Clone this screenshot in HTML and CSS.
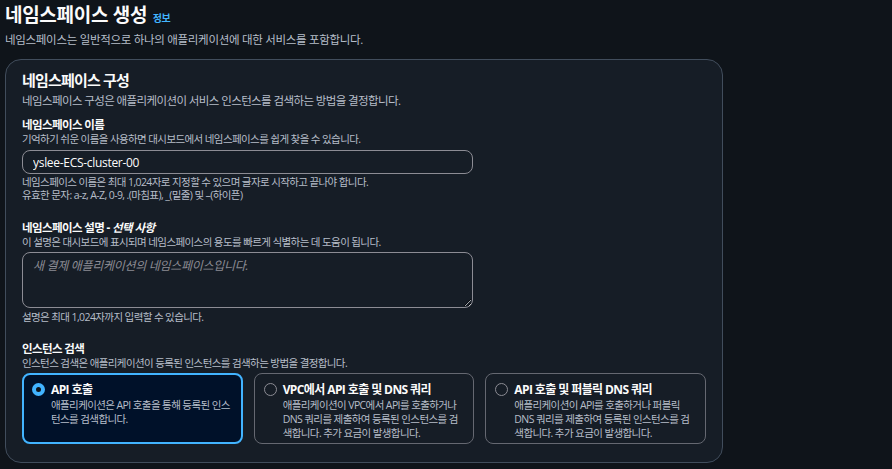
FILE: index.html
```html
<!DOCTYPE html>
<html lang="ko">
<head>
	<meta charset="utf-8">
	<title>네임스페이스 생성</title>
	<link rel="stylesheet" href="styles.css">
</head>
<body>
	<div class="page">
		<div class="page-head">
			<h1>네임스페이스 생성 <a class="info" href="#">정보</a></h1>
			<p class="sub">네임스페이스는 일반적으로 하나의 애플리케이션에 대한 서비스를 포함합니다.</p>
		</div>

		<div class="card">
			<h2>네임스페이스 구성</h2>
			<p class="desc">네임스페이스 구성은 애플리케이션이 서비스 인스턴스를 검색하는 방법을 결정합니다.</p>

			<!-- 이름 -->
			<div class="field">
				<label class="label">네임스페이스 이름</label>
				<div class="hint">기억하기 쉬운 이름을 사용하면 대시보드에서 네임스페이스를 쉽게 찾을 수 있습니다.</div>
				<input class="input" type="text" value="yslee-ECS-cluster-00">
				<div class="note">네임스페이스 이름은 최대 1,024자로 지정할 수 있으며 글자로 시작하고 끝나야 합니다.<br>유효한 문자: a-z, A-Z, 0-9, .(마침표), _(밑줄) 및 –(하이픈)</div>
			</div>

			<!-- 설명 -->
			<div class="field">
				<label class="label">네임스페이스 설명 - <i>선택 사항</i></label>
				<div class="hint">이 설명은 대시보드에 표시되며 네임스페이스의 용도를 빠르게 식별하는 데 도움이 됩니다.</div>
				<textarea class="input area" placeholder="새 결제 애플리케이션의 네임스페이스입니다."></textarea>
				<div class="note">설명은 최대 1,024자까지 입력할 수 있습니다.</div>
			</div>

			<!-- 인스턴스 검색 -->
			<div class="field">
				<label class="label">인스턴스 검색</label>
				<div class="hint">인스턴스 검색은 애플리케이션이 등록된 인스턴스를 검색하는 방법을 결정합니다.</div>
				<div class="tiles">
					<div class="tile on">
						<span class="radio"></span>
						<div>
							<div class="tile-title">API 호출</div>
							<div class="tile-desc">애플리케이션은 API 호출을 통해 등록된 인스턴스를 검색합니다.</div>
						</div>
					</div>
					<div class="tile">
						<span class="radio"></span>
						<div>
							<div class="tile-title">VPC에서 API 호출 및 DNS 쿼리</div>
							<div class="tile-desc">애플리케이션이 VPC에서 API를 호출하거나 DNS 쿼리를 제출하여 등록된 인스턴스를 검색합니다. 추가 요금이 발생합니다.</div>
						</div>
					</div>
					<div class="tile">
						<span class="radio"></span>
						<div>
							<div class="tile-title">API 호출 및 퍼블릭 DNS 쿼리</div>
							<div class="tile-desc">애플리케이션이 API를 호출하거나 퍼블릭 DNS 쿼리를 제출하여 등록된 인스턴스를 검색합니다. 추가 요금이 발생합니다.</div>
						</div>
					</div>
				</div>
			</div>
		</div>
	</div>
</body>
</html>
```

FILE: styles.css
```css
html,body{margin:0;padding:0;background:#0f141a;}
body{font-family:"Open Sans","Noto Sans CJK KR",sans-serif;color:#c6c6cd;font-size:11px;letter-spacing:-0.6px;}
.page{padding:3px 5px 0 5px;width:718px;}

.page-head h1{margin:0;font-size:19px;line-height:24px;font-weight:700;color:#fbfbfb;letter-spacing:-0.3px;}
.page-head .info{font-size:10px;color:#42b4ff;text-decoration:none;letter-spacing:-0.5px;margin-left:1px;}
.page-head .sub{margin:2px 0 0 0;font-size:11.5px;line-height:16px;color:#b6bec9;letter-spacing:-0.3px;}

.card{margin-top:11px;background:#161d26;border:1px solid #414d5c;border-radius:16px;padding:9px 16px 18px 16px;}
.card h2{margin:0;font-size:15px;line-height:22px;font-weight:700;color:#fbfbfb;letter-spacing:-0.8px;}
.card .desc{margin:2px 0 0 0;font-size:11.5px;line-height:16px;color:#b6bec9;}

.field{margin-top:8px;}
.field + .field{margin-top:18px;}
.field:last-child{margin-top:17px;}
.label{display:block;font-size:11.5px;line-height:15px;font-weight:700;color:#fbfbfb;}
.label i{font-weight:700;}
.hint{font-size:10.5px;line-height:14px;color:#b6bec9;}
.note{margin-top:2px;font-size:10.5px;line-height:13px;color:#b6bec9;}

.input{display:block;box-sizing:border-box;width:451px;height:24px;margin-top:4px;padding:0 10px;background:#161d26;border:1px solid #8c8c94;border-radius:8px;color:#fbfbfb;font-family:"Open Sans","Noto Sans CJK KR",sans-serif;font-size:12px;letter-spacing:-0.3px;outline:none;}
.area{height:56px;margin-top:3px;padding:3px 10px;resize:vertical;}
.area + .note{margin-top:3px;}
.area::placeholder{color:#8c8c94;font-style:italic;font-size:12px;}

.tiles{display:flex;gap:11px;margin-top:3px;}
.tile{box-sizing:border-box;width:221px;height:71px;display:flex;gap:6px;padding:8px 9px;border:1px solid #656871;border-radius:8px;}
.tile.on{background:#001129;border:2px solid #42b4ff;padding:7px 8px;}
.radio{flex:none;width:13px;height:13px;margin-top:1px;border:1.5px solid #8c8c94;border-radius:50%;box-sizing:border-box;}
.tile.on .radio{border:4px solid #42b4ff;background:#0f141a;}
.tile-title{font-size:12px;line-height:16px;font-weight:700;color:#fbfbfb;}
.tile-desc{font-size:10.5px;line-height:14px;color:#b6bec9;}
```
